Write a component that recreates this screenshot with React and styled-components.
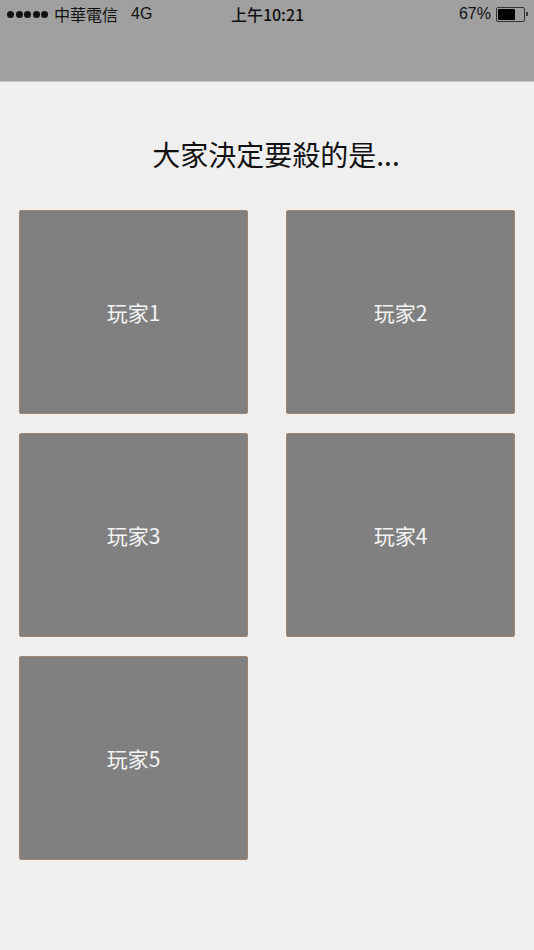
import React from 'react';
import styled, { createGlobalStyle } from 'styled-components';

const GlobalStyle = createGlobalStyle`
  html, body {
    margin: 0;
    padding: 0;
    background: #efefef;
    font-family: "Noto Sans CJK TC", "Noto Sans", sans-serif;
  }
`;

const Screen = styled.div`
  width: 534px;
  height: 950px;
  background: #efefef;
  display: flex;
  flex-direction: column;
`;

const StatusBar = styled.div`
  height: 82px;
  background: #a0a0a0;
  border-bottom: 1px solid #c4c4c4;
  box-sizing: border-box;
  font-family: "Liberation Sans", "Noto Sans CJK TC", sans-serif;
  font-size: 16px;
  color: #111;
`;

const StatusRow = styled.div`
  height: 28px;
  display: flex;
  align-items: center;
  justify-content: space-between;
  padding: 0 6px 0 7px;
`;

const Side = styled.div`
  display: flex;
  align-items: center;
  width: 180px;
  justify-content: ${p => (p.right ? 'flex-end' : 'flex-start')};
`;

const Dots = styled.span`
  display: flex;
  gap: 1.5px;
  margin-right: 6px;
`;

const Dot = styled.span`
  width: 7px;
  height: 7px;
  border-radius: 50%;
  background: #111;
`;

const Network = styled.span`
  margin-left: 13px;
`;

const Clock = styled.div`
  font-weight: 500;
  font-size: 16px;
  font-family: "Noto Sans CJK TC", "Noto Sans", sans-serif;
`;

const Battery = styled.span`
  display: flex;
  align-items: center;
  margin-left: 5px;
`;

const BatteryBody = styled.span`
  width: 25px;
  height: 11px;
  border: 1px solid #333;
  border-radius: 2px;
  padding: 1px;
  box-sizing: content-box;
  display: flex;
`;

const BatteryFill = styled.span`
  width: 67%;
  background: #000;
  border-radius: 1px;
`;

const BatteryTip = styled.span`
  width: 2px;
  height: 4px;
  background: #333;
  margin-left: 1px;
  border-radius: 0 1px 1px 0;
`;

const Title = styled.h1`
  margin: 52px 0 36px;
  padding-left: 18px;
  text-align: center;
  font-size: 28px;
  font-weight: 400;
  line-height: 40px;
  color: #111;
`;

const Grid = styled.div`
  display: grid;
  grid-template-columns: 229px 229px;
  column-gap: 38px;
  row-gap: 19px;
  padding: 0 19px;
`;

const PlayerCard = styled.button`
  height: 204px;
  background: #808080;
  border: 1px solid #a08470;
  border-radius: 2px;
  color: #f4f4f4;
  font-family: "Noto Sans CJK TC", "Noto Sans", sans-serif;
  font-size: 21px;
  padding: 0;
  cursor: pointer;
`;

const players = ['玩家1', '玩家2', '玩家3', '玩家4', '玩家5'];

export default function App() {
  return (
    <Screen>
      <GlobalStyle />
      <StatusBar>
        <StatusRow>
          <Side>
            <Dots>
              {[0, 1, 2, 3, 4].map(i => <Dot key={i} />)}
            </Dots>
            <span>中華電信</span>
            <Network>4G</Network>
          </Side>
          <Clock>上午10:21</Clock>
          <Side right>
            <span>67%</span>
            <Battery>
              <BatteryBody><BatteryFill /></BatteryBody>
              <BatteryTip />
            </Battery>
          </Side>
        </StatusRow>
      </StatusBar>
      <Title>大家決定要殺的是...</Title>
      <Grid>
        {players.map(name => (
          <PlayerCard key={name}>{name}</PlayerCard>
        ))}
      </Grid>
    </Screen>
  );
}
